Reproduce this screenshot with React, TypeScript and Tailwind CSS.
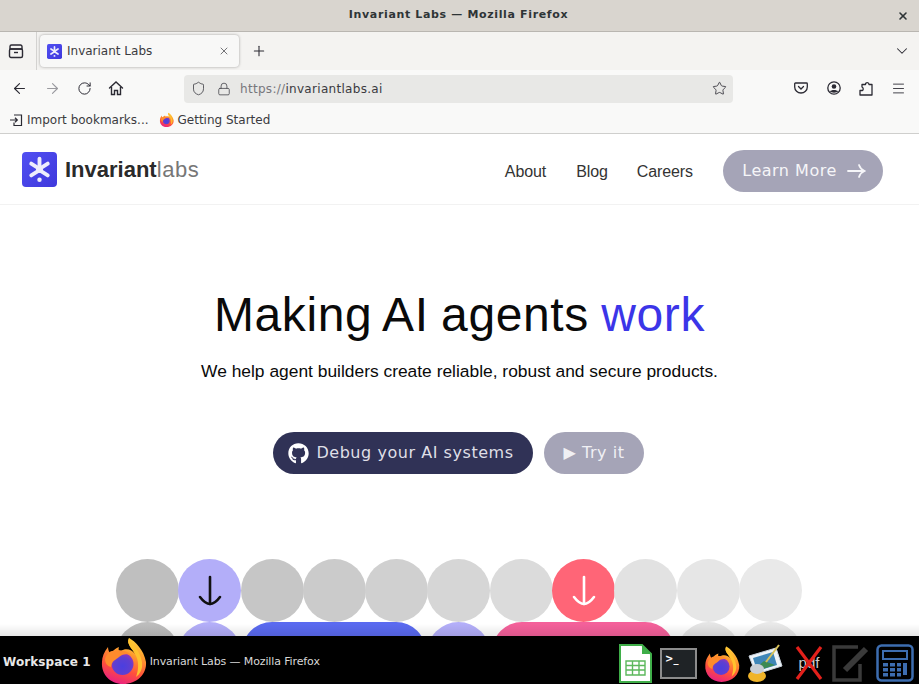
import React from 'react';
import { ArrowLeft, ArrowRight, ChevronDown, Lock, Menu, Plus, RotateCw, Shield, Star, X } from 'lucide-react';
import { FaGithub } from 'react-icons/fa';

const LogoMark = ({ size }: { size: number }) => (
    <svg width={size} height={size} viewBox="0 0 36 36">
        <defs>
            <linearGradient id="logoBg" x1="0" y1="0" x2="1" y2="1">
                <stop offset="0" stopColor="#5150f2" />
                <stop offset="1" stopColor="#3f38dc" />
            </linearGradient>
        </defs>
        <rect width="36" height="36" rx="4" fill="url(#logoBg)" />
        <g stroke="#eeeefc" strokeLinecap="round" strokeWidth="4">
            <path d="M18 7v8" />
            <path d="M9.500 12l6.500 4" />
            <path d="M26.500 12l-6.500 4" />
            <path d="M9.500 24l6.500-4" />
            <path d="M26.500 24l-6.500-4" />
        </g>
        <circle cx="18" cy="18" r="3.600" fill="#eeeefc" />
        <circle cx="18" cy="28.500" r="2.300" fill="#eeeefc" />
    </svg>
);

const FirefoxLogo = ({ size, id }: { size: number; id: string }) => (
    <svg width={size} height={size} viewBox="0 0 48 48">
        <defs>
            <linearGradient id={`${id}a`} x1="0.75" y1="0" x2="0.4" y2="1">
                <stop offset="0" stopColor="#ffd53d" />
                <stop offset="0.35" stopColor="#ff9a2e" />
                <stop offset="0.7" stopColor="#ff4f3c" />
                <stop offset="1" stopColor="#e9227f" />
            </linearGradient>
            <radialGradient id={`${id}b`} cx="0.5" cy="0.6" r="0.6">
                <stop offset="0" stopColor="#4a3fe0" />
                <stop offset="0.65" stopColor="#5f3fd0" />
                <stop offset="1" stopColor="#9a35b8" />
            </radialGradient>
        </defs>
        <path
            d="M30 2C36 5 45 14 47 26 48 38 38 48 24 48 11 48 2 38 3 26 3 21 5 16 9 11 9 14 10 16 12 18 14 14 17 12 20 11 19 14 20 15 22 15 26 12 33 13 36 18 33 12 27 8 30 2z"
            fill={`url(#${id}a)`}
        />
        <path d="M30 2C33 8 41 14 43 26 44 33 41 38 37 41 40 33 40 24 36 18 33 12 27 8 30 2z" fill="#ffc22e" />
        <circle cx="23.500" cy="28" r="11" fill={`url(#${id}b)`} />
        <path d="M6 23C8 17 12 14 16 15 22 13 29 15 33 20 28 17 23 18 20 21 17 24 13 24 12 31 8 30 6 27 6 23z" fill="#ff8b2c" />
    </svg>
);

const CalcIcon = () => (
    <svg width="38" height="38" viewBox="0 0 38 38" fill="none">
        <rect x="1.500" y="1.500" width="35" height="35" rx="4" stroke="#3d6db0" strokeWidth="2.500" />
        <rect x="7" y="7" width="24" height="8" stroke="#3d6db0" strokeWidth="2" />
        <g fill="#3d6db0">
            <rect x="7" y="19" width="5" height="3.500" />
            <rect x="14" y="19" width="5" height="3.500" />
            <rect x="21" y="19" width="4" height="3.500" />
            <rect x="27" y="19" width="4" height="12" />
            <rect x="7" y="24" width="5" height="3.500" />
            <rect x="14" y="24" width="5" height="3.500" />
            <rect x="21" y="24" width="4" height="3.500" />
            <rect x="7" y="29" width="5" height="3.500" />
            <rect x="14" y="29" width="5" height="3.500" />
            <rect x="21" y="29" width="4" height="3.500" />
        </g>
    </svg>
);

const DownArrow = ({ color }: { color: string }) => (
    <svg width="24" height="32" viewBox="0 0 24 32" fill="none" stroke={color} strokeWidth="2.600" strokeLinecap="round">
        <path d="M12 2v27" />
        <path d="M2 22C5 26 8 29 12 29S19 26 22 22" />
    </svg>
);

const greyRow = [
    'bg-[#bfbfbf]',
    'bg-[#b3aef9]',
    'bg-[#c6c6c6]',
    'bg-[#cbcbcb]',
    'bg-[#d0d0d0]',
    'bg-[#d6d6d6]',
    'bg-[#dbdbdb]',
    'bg-[#ff6577]',
    'bg-[#e2e2e2]',
    'bg-[#e6e6e6]',
    'bg-[#e9e9e9]',
];

const App = () => {
    return (
        <div className="h-[684px] w-[919px] flex flex-col overflow-hidden bg-white font-['Liberation_Sans',sans-serif]">
            {/* window title */}
            <div className="h-[32px] shrink-0 flex items-center bg-[#d9d5cf] border-b border-[#b9b6b1] font-['DejaVu_Sans',sans-serif] text-[11px] font-bold tracking-[0.65px] text-[#2e3436]">
                <div className="w-[20px]" />
                <div className="flex-1 text-center">Invariant Labs — Mozilla Firefox</div>
                <X size={12} strokeWidth={3.2} className="mr-[10px]" />
            </div>

            {/* tabs */}
            <div className="h-[38px] shrink-0 flex items-center bg-[#f4f3f1] font-['DejaVu_Sans',sans-serif] text-[#3b3b40]">
                <div className="w-[37px] h-full flex items-center pl-[8px] border-r border-[#d3d2d0]">
                    <svg width="16" height="16" viewBox="0 0 16 16" fill="none" stroke="#2b2a33" strokeWidth="1.400">
                        <rect x="1.500" y="6" width="13" height="8.500" rx="1.500" />
                        <path d="M3.500 2h9a1.500 1.500 0 0 1 1.500 1.500V6H2V3.500A1.500 1.500 0 0 1 3.500 2z" />
                        <path d="M6 9.500h4" />
                    </svg>
                </div>
                <div className="ml-[3px] w-[199px] h-[32px] flex items-center rounded-[4px] bg-[#f8f8f7] shadow-[0_0_3px_rgba(0,0,0,0.35)] pl-[7px] pr-[9px] text-[12px]">
                    <LogoMark size={15} />
                    <span className="ml-[5px] flex-1">Invariant Labs</span>
                    <X size={12} strokeWidth={1.400} />
                </div>
                <Plus size={16} strokeWidth={1.600} className="ml-[12px] text-[#2b2a33]" />
                <ChevronDown size={18} strokeWidth={1.400} className="ml-auto mr-[8px] text-[#2b2a33]" />
            </div>

            {/* navigation */}
            <div className="h-[36px] shrink-0 flex items-center bg-[#f9f9f8] font-['DejaVu_Sans',sans-serif] text-[#2b2a33]">
                <ArrowLeft size={17} strokeWidth={1.600} className="ml-[11px]" />
                <ArrowRight size={17} strokeWidth={1.600} className="ml-[16px] text-[#9a9a9f]" />
                <RotateCw size={15} strokeWidth={1.600} className="ml-[16px]" />
                <svg width="16" height="16" viewBox="0 0 16 16" fill="none" stroke="#2b2a33" strokeWidth="1.400" className="ml-[16px]">
                    <path d="M1.500 8L8 2l6.500 6" strokeLinecap="round" />
                    <path d="M3.500 7v7.500h3V10.500h3v4h3V7" />
                </svg>
                <div className="ml-[60px] mt-[1px] w-[549px] h-[28px] flex items-center rounded-[4px] bg-[#e8e8e6] pl-[7px] pr-[6px] text-[12px] tracking-[0.3px]">
                    <Shield size={15} strokeWidth={1.400} className="text-[#4a4a50]" />
                    <Lock size={14} strokeWidth={1.400} className="ml-[11px] text-[#4a4a50]" />
                    <span className="ml-[9px] text-[#77777c]">https://</span>
                    <span className="text-[#3a3a40]">invariantlabs.ai</span>
                    <Star size={15} strokeWidth={1.300} className="ml-auto" />
                </div>
                <svg width="14" height="14" viewBox="0 0 14 14" fill="none" stroke="#2b2a33" strokeWidth="1.300" className="ml-[61px]">
                    <path d="M1.500 2h11a.8.8 0 0 1 .8.8V6A6.300 6 0 0 1 .7 6V2.800a.8.8 0 0 1 .8-.8z" />
                    <path d="M4.500 5.500L7 8l2.500-2.500" strokeLinecap="round" />
                </svg>
                <svg width="14" height="14" viewBox="0 0 14 14" className="ml-[19px]">
                    <circle cx="7" cy="7" r="6.200" fill="none" stroke="#2b2a33" strokeWidth="1.300" />
                    <circle cx="7" cy="5.500" r="2.300" fill="#2b2a33" />
                    <path d="M3 10.500c1-2 7-2 8 0-1 1.500-7 1.500-8 0z" fill="#2b2a33" />
                </svg>
                <svg width="14" height="15" viewBox="0 0 14 15" fill="none" stroke="#2b2a33" strokeWidth="1.300" className="ml-[18px]">
                    <path d="M1 14V9.500h2.500C4.500 9 4.500 6.500 3 6V3.500h3.500C6.500 1 10 1 10 3.500h3V14H1z" strokeLinejoin="round" />
                </svg>
                <Menu size={15} strokeWidth={1.400} className="ml-[18px]" />
            </div>

            {/* bookmarks */}
            <div className="h-[28px] shrink-0 flex items-center bg-[#f9f9f8] border-b border-[#cfcfcd] font-['DejaVu_Sans',sans-serif] text-[12px] text-[#3b3b40]">
                <svg width="14" height="14" viewBox="0 0 14 14" fill="none" stroke="#2b2a33" strokeWidth="1.200" className="ml-[9px]">
                    <path d="M5 2h7.500v10.500H5V9.500" />
                    <path d="M1 7h7M6 4.800L8.300 7 6 9.200" />
                </svg>
                <span className="ml-[4px]">Import bookmarks...</span>
                <span className="ml-[10px] flex">
                    <FirefoxLogo size={15} id="bm" />
                </span>
                <span className="ml-[4px]">Getting Started</span>
            </div>

            {/* page */}
            <div className="flex-1 min-h-0 relative overflow-hidden">
                <header className="h-[71px] flex items-center border-b border-[#f2f2f2] pl-[22px] pr-[36px]">
                    <LogoMark size={35} />
                    <div className="ml-[8px] text-[22px] leading-none mt-[1px]">
                        <span className="font-bold text-[#2a2a2a]">Invariant</span>
                        <span className="tracking-[0.6px] text-[#777777]">labs</span>
                    </div>
                    <nav className="ml-auto mt-[6px] flex items-center text-[16px] tracking-[-0.1px] text-[#333333]">
                        <a>About</a>
                        <a className="ml-[30px]">Blog</a>
                        <a className="ml-[29px]">Careers</a>
                    </nav>
                    <button className="ml-[30px] mt-[4px] w-[160px] h-[42px] pl-[2px] flex items-center justify-center rounded-full bg-[#a5a4b7] font-['DejaVu_Sans',sans-serif] text-[16px] tracking-[0.5px] text-[#f5f5f8]">
                        Learn More
                        <svg width="19" height="14" viewBox="0 0 19 14" fill="none" stroke="#f5f5f8" strokeWidth="1.800" strokeLinecap="round" className="ml-[10px]">
                            <path d="M1 7h16" />
                            <path d="M12 1c1 3 3 5 5.500 6-2.500 1-4.500 3-5.500 6" />
                        </svg>
                    </button>
                </header>

                <main className="flex flex-col items-center">
                    <h1 className="mt-[80px] text-[48px] leading-[60px] text-[#0a0a0a] tracking-[0.6px] [word-spacing:-1.500px]">
                        Making AI agents <span className="text-[#3b35e8]">work</span>
                    </h1>
                    <p className="mt-[14px] text-[17.400px] leading-[24px] text-[#0a0a0a]">
                        We help agent builders create reliable, robust and secure products.
                    </p>
                    <div className="-ml-[2px] mt-[49px] flex gap-[11px] font-['DejaVu_Sans',sans-serif] text-[16px] tracking-[0.55px]">
                        <button className="w-[260px] h-[42px] pr-[4px] flex items-center justify-center rounded-full bg-[#303256] text-[#dfdfe6]">
                            <FaGithub size={21} className="mr-[7px] text-white" />
                            Debug your AI systems
                        </button>
                        <button className="w-[100px] h-[42px] flex items-center justify-center rounded-full bg-[#a5a4b7] text-[#f0f0f4]">
                            ▶ Try it
                        </button>
                    </div>

                    <div className="mt-[85px] w-[687px] grid grid-cols-[repeat(11,62.300px)]">
                        {greyRow.map((color, index) => (
                            <div key={index} className={`h-[63px] w-[63px] rounded-full flex items-center justify-center ${color}`}>
                                {index === 1 && <DownArrow color="#111111" />}
                                {index === 7 && <DownArrow color="#ffffff" />}
                            </div>
                        ))}
                        <div className="h-[63px] w-[63px] rounded-full bg-[#bdbdbd]" />
                        <div className="h-[63px] w-[63px] rounded-full bg-[#b3aef9]" />
                        <div className="col-span-3 h-[63px] mx-[1px] rounded-[30px] bg-[#5a6af0]" />
                        <div className="h-[63px] w-[63px] rounded-full bg-[#b3aef9]" />
                        <div className="col-span-3 h-[63px] mx-[2px] rounded-[30px] bg-[#f4609a]" />
                        <div className="h-[63px] w-[63px] rounded-full bg-[#e5e5e5]" />
                        <div className="h-[63px] w-[63px] rounded-full bg-[#e9e9e9]" />
                    </div>
                </main>
                <div className="absolute bottom-0 inset-x-0 h-[12px] bg-gradient-to-b from-transparent to-[#00000018]" />
            </div>

            {/* panel */}
            <div className="h-[48px] shrink-0 flex items-center bg-black font-['DejaVu_Sans',sans-serif]">
                <span className="ml-[3px] mt-[4px] text-[12px] font-bold tracking-[0.1px] text-[#e8e8e8]">Workspace 1</span>
                <span className="ml-[8px] flex">
                    <FirefoxLogo size={48} id="pa" />
                </span>
                <span className="ml-[3px] mt-[4px] text-[11px] tracking-[-0.12px] text-[#d8d8d8]">Invariant Labs — Mozilla Firefox</span>
                <div className="ml-auto mt-[6px] flex items-center pr-[5px]">
                    <svg width="33" height="39" viewBox="0 0 33 39">
                        <path d="M1 1h22l9 9v28H1z" fill="#ffffff" stroke="#3fae49" strokeWidth="2" />
                        <path d="M23 1l9 9h-9z" fill="#3fae49" />
                        <path d="M7 17h19v14H7zM7 21.500h19M7 26h19M13.500 17v14M20 17v14" fill="none" stroke="#5cb85c" strokeWidth="1.400" />
                    </svg>
                    <div className="ml-[8px] w-[37px] h-[31px] bg-[#1f2326] border-2 border-[#8c8c8c] flex items-start p-[3px]">
                        <span className="text-[10px] leading-[12px] font-bold text-white">&gt;_</span>
                    </div>
                    <span className="ml-[6px] flex">
                        <FirefoxLogo size={37} id="pb" />
                    </span>
                    <svg width="37" height="39" viewBox="0 0 37 39" className="ml-[6px]">
                        <path d="M3 12l27-8 6 18-26 8z" fill="#eef3f8" stroke="#c8d2dc" />
                        <path d="M7 14l20-6 4 13-20 6z" fill="#3f86b8" />
                        <path d="M9 25l9-8 11 4-18 6z" fill="#3d8a52" />
                        <path d="M20 18L33 1" stroke="#d8c25a" strokeWidth="2" />
                        <ellipse cx="11" cy="32" rx="9" ry="6" fill="#f0b429" />
                        <ellipse cx="11" cy="25" rx="7" ry="5" fill="#c9ced4" />
                    </svg>
                    <div className="ml-[12px] relative w-[28px] h-[36px] flex items-center justify-center">
                        <span className="font-['Liberation_Sans',sans-serif] text-[15px] text-[#cfcfcf]">pdf</span>
                        <svg width="28" height="36" viewBox="0 0 28 36" className="absolute inset-0">
                            <path d="M2 2l24 32M26 2L2 34" stroke="#e3201b" strokeWidth="3.200" />
                        </svg>
                    </div>
                    <svg width="40" height="38" viewBox="0 0 40 38" fill="none" stroke="#3a3a3a" strokeWidth="3.500" className="ml-[9px]">
                        <path d="M26 3H2v33h26V20" />
                        <path d="M13 26L34 5" strokeWidth="6" />
                    </svg>
                    <span className="ml-[4px] flex">
                        <CalcIcon />
                    </span>
                </div>
            </div>
        </div>
    );
};

export default App;
